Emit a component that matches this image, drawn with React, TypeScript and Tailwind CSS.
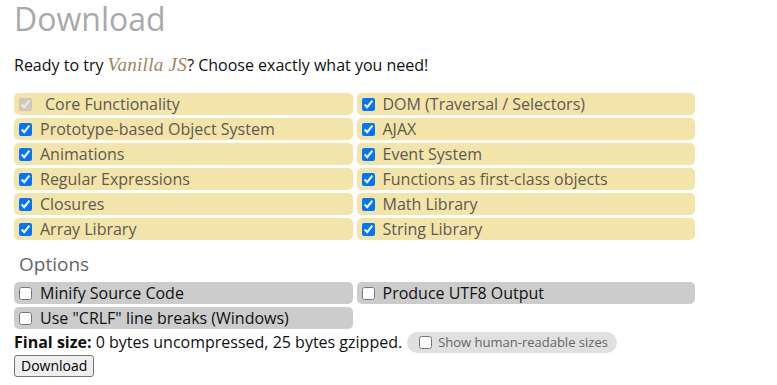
import React from "react";

const left = [
  "Prototype-based Object System",
  "Animations",
  "Regular Expressions",
  "Closures",
  "Array Library",
];
const right = [
  "DOM (Traversal / Selectors)",
  "AJAX",
  "Event System",
  "Functions as first-class objects",
  "Math Library",
  "String Library",
];

function Feature({ label, disabled }: { label: string; disabled?: boolean }) {
  return (
    <label className="flex items-center h-[22px] rounded-[5px] bg-[#f3e4a9] pl-[4px] text-[#5c5a55]">
      <input
        type="checkbox"
        defaultChecked
        disabled={disabled}
        className="w-[13px] h-[13px] m-0 ml-[1px] mr-[8px] shrink-0"
      />
      <span className={disabled ? "ml-[5px]" : ""}>{label}</span>
    </label>
  );
}

function Option({ label }: { label: string }) {
  return (
    <label className="flex items-center h-[22px] rounded-[5px] bg-[#cccccc] pl-[4px] text-[#111]">
      <input type="checkbox" className="w-[13px] h-[13px] m-0 ml-[1px] mr-[8px] shrink-0" />
      <span>{label}</span>
    </label>
  );
}

export default function App() {
  const leftAll = [{ l: "Core Functionality", d: true }, ...left.map((l) => ({ l, d: false }))];
  return (
    <div
      className="w-[777px] h-[385px] bg-white overflow-hidden px-[14px] text-[16px]"
      style={{ fontFamily: '"Open Sans", "Noto Sans", sans-serif' }}
    >
      <h1 className="text-[32px] leading-[38px] text-[#aaaaaa] m-0 font-normal">Download</h1>
      <p className="mt-[16px] leading-[22px] text-[#111]">
        Ready to try{" "}
        <span
          className="italic text-[#a0855a] text-[19px] tracking-[0.3px]"
          style={{ fontFamily: '"Liberation Serif", serif' }}
        >
          Vanilla JS
        </span>
        ? Choose exactly what you need!
      </p>
      <div className="mt-[17px] grid grid-cols-2 w-[681px] gap-x-[4px] gap-y-[3px]">
        {leftAll.map((f, i) => (
          <React.Fragment key={i}>
            <Feature label={f.l} disabled={f.d} />
            <Feature label={right[i]} />
          </React.Fragment>
        ))}
      </div>
      <h2 className="mt-[12px] ml-[5px] text-[19px] leading-[24px] text-[#666] font-normal">Options</h2>
      <div className="mt-[6px] grid grid-cols-2 w-[681px] gap-x-[4px] gap-y-[3px]">
        <Option label="Minify Source Code" />
        <Option label="Produce UTF8 Output" />
        <Option label='Use "CRLF" line breaks (Windows)' />
      </div>
      <div className="mt-[2px] flex items-center leading-[22px] text-[#111]">
        <span>
          <b className="font-bold">Final size:</b> 0 bytes uncompressed, 25 bytes gzipped.
        </span>
        <label className="ml-[5px] flex items-center h-[21px] rounded-full bg-[#e0e0e0] pl-[12px] pr-[9px] text-[13px] text-[#666]">
          <input type="checkbox" className="w-[13px] h-[13px] m-0 mr-[6px]" />
          <span>Show human-readable sizes</span>
        </label>
      </div>
      <button className="-mt-[3px] h-[22px] px-[6px] text-[14px] text-black bg-[#efefef] border border-[#767676] rounded-[3px] leading-none">
        Download
      </button>
    </div>
  );
}
